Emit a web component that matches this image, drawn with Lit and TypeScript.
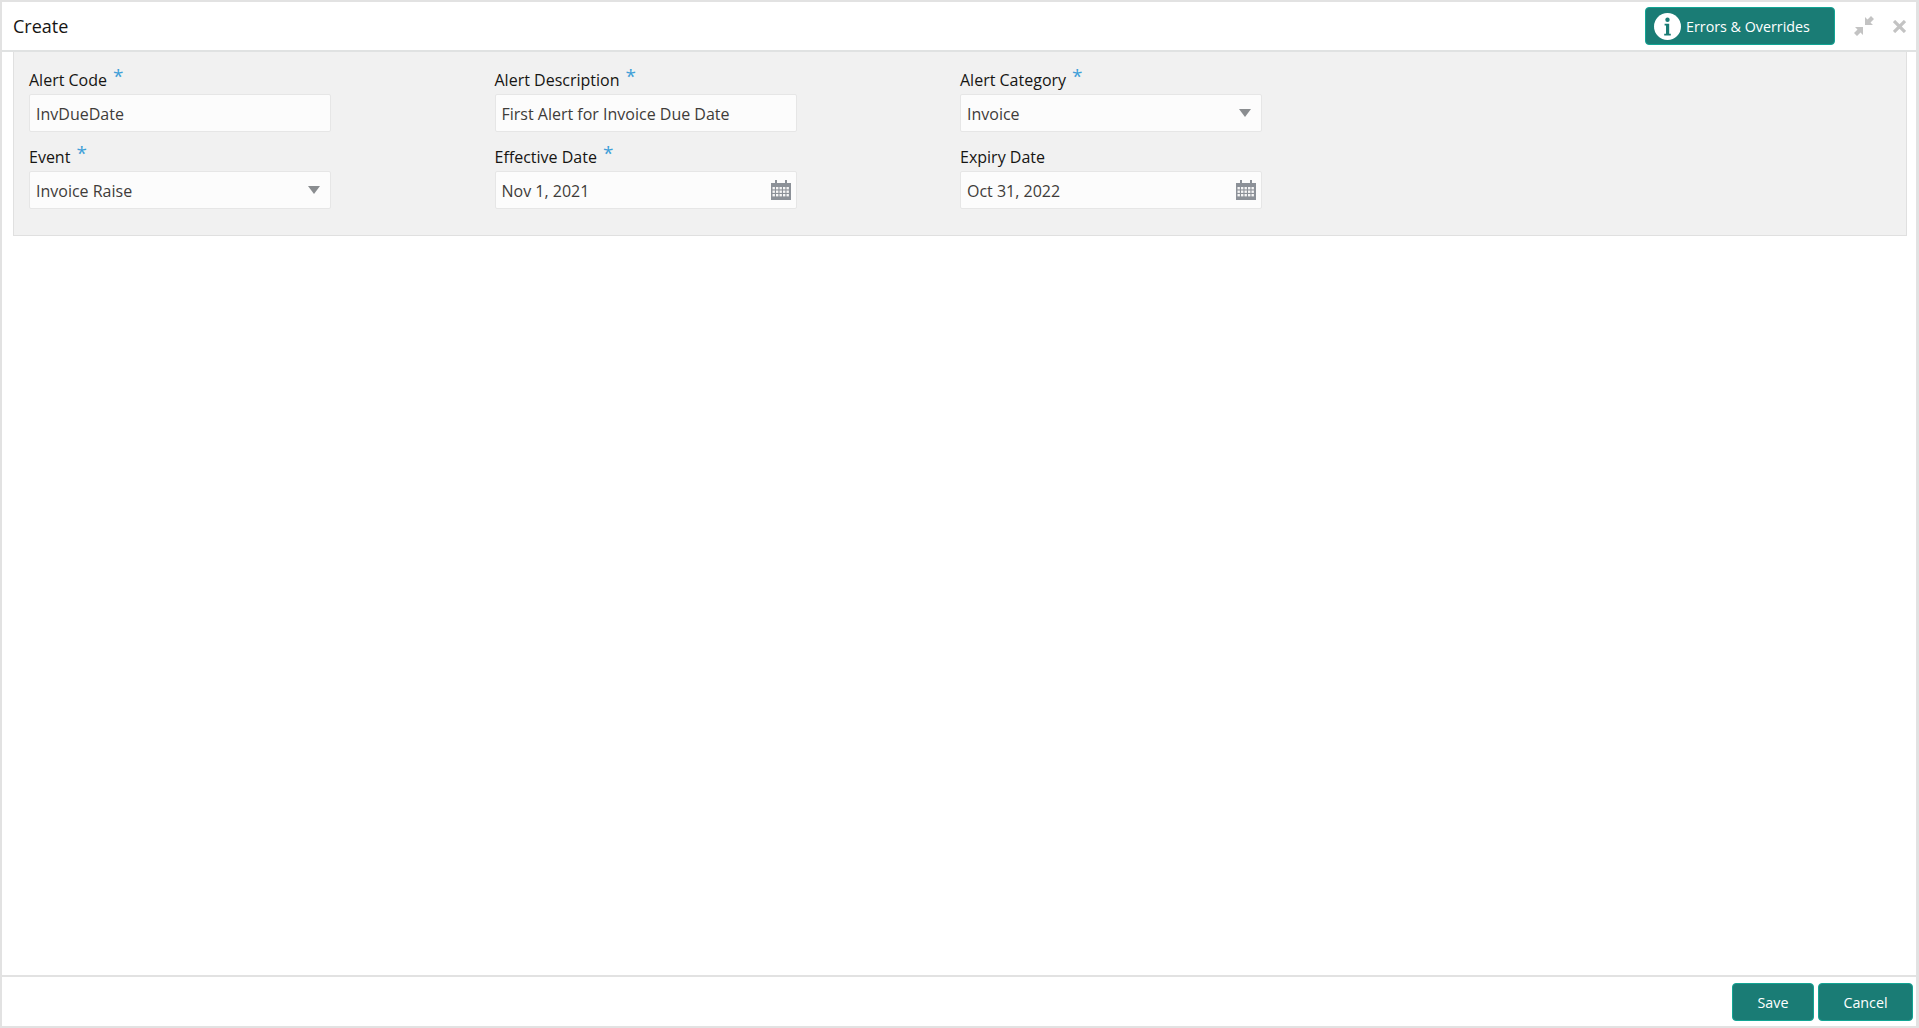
import { LitElement, html, css, svg } from "lit";
import { customElement } from "lit/decorators.js";

const calendar = html`<svg class="cal" viewBox="0 0 20 20" width="20" height="20" aria-hidden="true">
  <path fill="#8c9198" d="M0 3h4V0h2v3h8V0h2v3h4v17H0z"/>
  <g fill="#f6f6f6">
    ${[7, 10.5, 14].map((y) =>
      [1.5, 5, 8.5, 12, 15.5].map((x) => svg`<rect x="${x}" y="${y}" width="2.4" height="2.4"/>`)
    )}
  </g>
</svg>`;

const caret = html`<svg class="caret" viewBox="0 0 12 8" width="12" height="8" aria-hidden="true"><path fill="#8a8d90" d="M0 0h12L6 8z"/></svg>`;

@customElement("app-root")
export class AppRoot extends LitElement {
  static styles = css`
    :host {
      display: flex;
      flex-direction: column;
      box-sizing: border-box;
      height: 100vh;
      background: #fff;
      border: 2px solid #e2e2e2;
      border-right-width: 3px;
      font-family: "Open Sans", "Noto Sans", sans-serif;
      color: #161513;
    }
    .header {
      flex: none;
      height: 50px;
      box-sizing: border-box;
      border-bottom: 2px solid #e0e2e2;
      display: flex;
      align-items: center;
      padding: 0 10px 0 11px;
    }
    .title {
      font-size: 18px;
      flex: 1;
      padding-bottom: 1px;
    }
    .btn {
      font: inherit;
      box-sizing: border-box;
      color: #fff;
      background: #1a7c75;
      border: 1px solid #12a594;
      border-radius: 4px;
      height: 38px;
      font-size: 14.3px;
      padding: 0;
    }
    .errors {
      width: 190px;
      display: flex;
      align-items: center;
      gap: 5px;
      padding-left: 8px;
    }
    .info {
      width: 27px;
      height: 27px;
      flex: none;
    }
    .win {
      margin-left: 19px;
      flex: none;
    }
    .main {
      flex: 1;
      min-height: 0;
      padding: 0 9px 0 11px;
    }
    .panel {
      box-sizing: border-box;
      height: 184px;
      background: #f1f1f1;
      border: 1px solid #e0e0e0;
      border-top: none;
      padding: 9px 15px 0;
      display: grid;
      grid-template-columns: repeat(3, 302px);
      column-gap: 163.5px;
      grid-auto-rows: 77px;
    }
    .field {
      display: flex;
      flex-direction: column;
    }
    label {
      font-size: 16px;
      height: 33px;
      display: flex;
      align-items: flex-end;
      padding-bottom: 3px;
      box-sizing: border-box;
      line-height: 22px;
    }
    .req {
      color: #3f9fd8;
      font-size: 19px;
      line-height: 16px;
      margin-left: 6px;
      align-self: flex-start;
      margin-top: 7px;
    }
    .input {
      box-sizing: border-box;
      height: 38px;
      background: #fcfcfc;
      border: 1px solid #e6e6e6;
      border-radius: 2px;
      display: flex;
      align-items: center;
      justify-content: space-between;
      padding: 0 5px 0 6px;
      font-size: 16px;
      color: #3f3c3a;
    }
    .input span {
      padding-top: 1px;
    }
    .caret {
      margin-right: 5px;
    }
    .footer {
      flex: none;
      height: 51px;
      box-sizing: border-box;
      border-top: 2px solid #e2e2e2;
      display: flex;
      justify-content: flex-end;
      align-items: flex-start;
      gap: 4px;
      padding: 6px 3px 0 0;
    }
    .save { width: 82px; }
    .cancel { width: 95px; }
  `;

  private field(label: string, value: string, required: boolean, kind?: "select" | "date") {
    return html`<div class="field">
      <label>${label}${required ? html`<span class="req">*</span>` : ""}</label>
      <div class="input">
        <span>${value}</span>
        ${kind === "select" ? caret : kind === "date" ? calendar : ""}
      </div>
    </div>`;
  }

  render() {
    return html`
      <div class="header">
        <div class="title">Create</div>
        <button class="btn errors">
          <svg class="info" viewBox="0 0 27 27" aria-hidden="true">
            <circle cx="13.5" cy="13.5" r="13.5" fill="#fff"/>
            <circle cx="13.5" cy="6.8" r="2.2" fill="#1a7c75"/>
            <path fill="#1a7c75" d="M10.6 10.8h4.6v10h1.6v1.6H10.2v-1.6h1.8v-8.4h-1.4z"/>
          </svg>
          Errors &amp; Overrides
        </button>
        <svg class="win" viewBox="0 0 20 20" width="20" height="20" aria-hidden="true">
          <path fill="#c3c3c3" d="M11 1v8h8l-2.5-2.5L20 3l-3-3-3.5 3.5z"/>
          <path fill="#c3c3c3" transform="rotate(180 10 10)" d="M11 1v8h8l-2.5-2.5L20 3l-3-3-3.5 3.5z"/>
        </svg>
        <svg class="win" viewBox="0 0 13 13" width="13" height="13" aria-hidden="true">
          <path fill="none" stroke="#c3c3c3" stroke-width="3.2" d="M1 1l11 11M12 1L1 12"/>
        </svg>
      </div>
      <div class="main">
        <div class="panel">
          ${this.field("Alert Code", "InvDueDate", true)}
          ${this.field("Alert Description", "First Alert for Invoice Due Date", true)}
          ${this.field("Alert Category", "Invoice", true, "select")}
          ${this.field("Event", "Invoice Raise", true, "select")}
          ${this.field("Effective Date", "Nov 1, 2021", true, "date")}
          ${this.field("Expiry Date", "Oct 31, 2022", false, "date")}
        </div>
      </div>
      <div class="footer">
        <button class="btn save">Save</button>
        <button class="btn cancel">Cancel</button>
      </div>
    `;
  }
}
